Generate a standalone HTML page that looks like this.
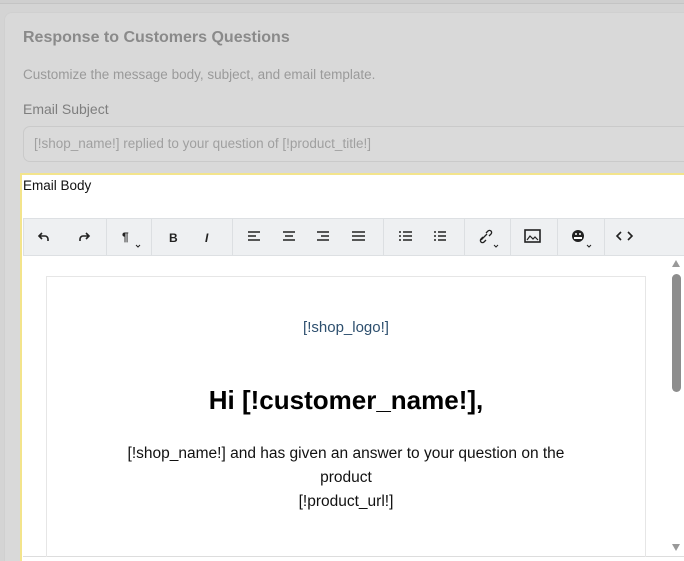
<!DOCTYPE html>
<html><head><meta charset="utf-8"><style>
*{box-sizing:border-box;margin:0;padding:0}
html,body{width:684px;height:561px;overflow:hidden}
body{background:#d4d4d4;font-family:"Liberation Sans",sans-serif;position:relative}
.topline{position:absolute;left:0;top:0;width:684px;height:4px;background:#cfcfcf;border-bottom:1px solid #c4c4c4}
.panel{position:absolute;left:4px;top:12px;width:680px;height:549px;background:#d9d9d9;border-radius:8px 0 0 0;border:1px solid #d0d0d0;border-right:none;border-bottom:none}
.t{position:absolute;left:23px;color:#8a8a8a;white-space:nowrap}
.input{position:absolute;left:23px;top:126px;width:661px;height:36px;border:1px solid #cacaca;border-right:none;border-radius:7px 0 0 7px;background:#dadada;color:#a0a0a0;font-size:13.5px;padding:9px 10px;white-space:nowrap}
.body{position:absolute;left:20px;top:173px;width:664px;height:388px;background:#fff;border:2px solid #f3e48c;border-right:none;border-bottom:none}
.lbl{position:absolute;left:23px;top:178px;font-size:13.5px;color:#111}
.tb{position:absolute;left:23px;top:218px;width:661px;height:38px;background:#eef0f2;border:1px solid #dde0e3;border-right:none}
.sep{position:absolute;top:0;width:1px;height:36px;background:#dcdfe2}
.card{position:absolute;left:46px;top:276px;width:600px;height:281px;border:1px solid #e6e6e6;border-bottom:none}
.ed{position:absolute;left:23px;top:256px;width:661px;height:301px;border-bottom:1px solid #ddd}
.c{position:absolute;left:46px;width:600px;text-align:center;white-space:nowrap}
</style></head><body>
<div class="topline"></div>
<div class="panel"></div>
<div class="t" style="top:29px;font-size:16px;font-weight:bold;color:#8a8a8a">Response to Customers Questions</div>
<div class="t" style="top:67px;font-size:13.5px;color:#9a9a9a">Customize the message body, subject, and email template.</div>
<div class="t" style="top:101px;font-size:14px;color:#7e7e7e">Email Subject</div>
<div class="input">[!shop_name!] replied to your question of [!product_title!]</div>
<div class="body"></div>
<div class="lbl">Email Body</div>
<div class="ed"></div>
<div class="tb">
<div class="sep" style="left:82px"></div><div class="sep" style="left:127px"></div><div class="sep" style="left:208px"></div><div class="sep" style="left:359px"></div><div class="sep" style="left:440px"></div><div class="sep" style="left:486px"></div><div class="sep" style="left:533px"></div><div class="sep" style="left:580px"></div>
</div>
<svg style="position:absolute;left:0;top:218px" width="684" height="38" fill="none" stroke="#222" stroke-width="1.6">
<path d="M42 21 l-3-3 3-3 M39 18 h6 a3 3 0 0 1 3 3 v2"/>
<path d="M86 21 l3-3-3-3 M89 18 h-6 a3 3 0 0 0-3 3 v2"/>
<text x="122" y="23" font-size="12" font-weight="bold" fill="#222" stroke="none" font-family="Liberation Sans">¶</text><path d="M136 27 l2 2 2-2" stroke-width="1"/>
<text x="169" y="24" font-size="12" font-weight="bold" fill="#222" stroke="none" font-family="Liberation Sans">B</text>
<text x="205" y="24" font-size="12" font-style="italic" font-weight="bold" fill="#222" stroke="none" font-family="Liberation Sans">I</text>
<path d="M248 14h12M248 18h8M248 22h12M283 14h12M285 18h8M283 22h12M317 14h12M321 18h8M317 22h12M352 14h13M352 18h13M352 22h13"/>
<path d="M399 14h2M399 18h2M399 22h2M403 14h9M403 18h9M403 22h9M434 14h2M434 18h2M434 22h2M438 14h8M438 18h8M438 22h8" stroke-width="1.4"/>
<path d="M481 22 l6-6 M483 19 l-2 2 a2 2 0 0 0 3 3 l2-2 M486 15 l2-2 a2 2 0 0 1 3 3 l-2 2" stroke-width="1.3"/><path d="M494 27 l2 2 2-2" stroke-width="1"/>
<rect x="525" y="12" width="15" height="12" stroke-width="1.6"/><path d="M527 22 l3-4 3 3 2-2 3 3" stroke-width="1.2"/>
<circle cx="578" cy="18" r="6" fill="#222" stroke="none"/><rect x="574" y="19" width="8" height="2" fill="#fff" stroke="none"/><circle cx="576" cy="16" r="1" fill="#fff" stroke="none"/><circle cx="580" cy="16" r="1" fill="#fff" stroke="none"/><path d="M587 27 l2 2 2-2" stroke-width="1"/>
<path d="M621 14 l-4 4 4 4 M628 14 l4 4-4 4"/>
</svg>
<div class="card"></div>
<div class="c" style="top:319px;font-size:15px;color:#2d4f6e">[!shop_logo!]</div>
<div class="c" style="top:385px;font-size:26px;font-weight:bold;color:#000">Hi [!customer_name!],</div>
<div class="c" style="top:442px;font-size:15.5px;line-height:24px;color:#111">[!shop_name!] and has given an answer to your question on the<br>product<br>[!product_url!]</div>
<div style="position:absolute;left:670px;top:256px;width:14px;height:300px;background:#fff"></div>
<div style="position:absolute;left:672px;top:260px;width:0;height:0;border-left:4px solid transparent;border-right:4px solid transparent;border-bottom:7px solid #999"></div>
<div style="position:absolute;left:672px;top:274px;width:9px;height:118px;background:#8d8d8d;border-radius:5px"></div>
<div style="position:absolute;left:672px;top:544px;width:0;height:0;border-left:4px solid transparent;border-right:4px solid transparent;border-top:7px solid #999"></div>
</body></html>
